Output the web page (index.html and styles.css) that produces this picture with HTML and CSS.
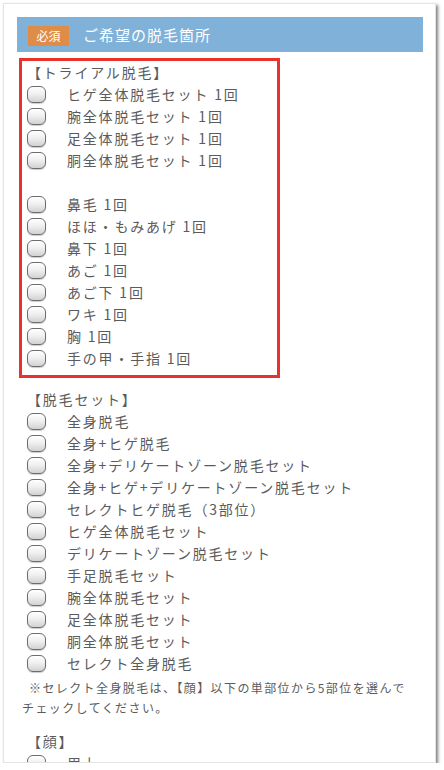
FILE: index.html
```html
<!DOCTYPE html>
<html lang="ja">
<head>
<meta charset="utf-8">
<link rel="stylesheet" href="styles.css">
</head>
<body>
<div class="card">
  <div class="head">
    <span class="badge">必須</span>
    <span class="title">ご希望の脱毛箇所</span>
  </div>

  <div class="group trial">
    <div class="label">【トライアル脱毛】</div>
    <label class="row"><input type="checkbox" class="cb"><span>ヒゲ全体脱毛セット 1回</span></label>
    <label class="row"><input type="checkbox" class="cb"><span>腕全体脱毛セット 1回</span></label>
    <label class="row"><input type="checkbox" class="cb"><span>足全体脱毛セット 1回</span></label>
    <label class="row"><input type="checkbox" class="cb"><span>胴全体脱毛セット 1回</span></label>
    <div class="blank"></div>
    <label class="row"><input type="checkbox" class="cb"><span>鼻毛 1回</span></label>
    <label class="row"><input type="checkbox" class="cb"><span>ほほ・もみあげ 1回</span></label>
    <label class="row"><input type="checkbox" class="cb"><span>鼻下 1回</span></label>
    <label class="row"><input type="checkbox" class="cb"><span>あご 1回</span></label>
    <label class="row"><input type="checkbox" class="cb"><span>あご下 1回</span></label>
    <label class="row"><input type="checkbox" class="cb"><span>ワキ 1回</span></label>
    <label class="row"><input type="checkbox" class="cb"><span>胸 1回</span></label>
    <label class="row"><input type="checkbox" class="cb"><span>手の甲・手指 1回</span></label>
  </div>

  <div class="group sets">
    <div class="label">【脱毛セット】</div>
    <label class="row"><input type="checkbox" class="cb"><span>全身脱毛</span></label>
    <label class="row"><input type="checkbox" class="cb"><span>全身+ヒゲ脱毛</span></label>
    <label class="row"><input type="checkbox" class="cb"><span>全身+デリケートゾーン脱毛セット</span></label>
    <label class="row"><input type="checkbox" class="cb"><span>全身+ヒゲ+デリケートゾーン脱毛セット</span></label>
    <label class="row"><input type="checkbox" class="cb"><span>セレクトヒゲ脱毛（3部位）</span></label>
    <label class="row"><input type="checkbox" class="cb"><span>ヒゲ全体脱毛セット</span></label>
    <label class="row"><input type="checkbox" class="cb"><span>デリケートゾーン脱毛セット</span></label>
    <label class="row"><input type="checkbox" class="cb"><span>手足脱毛セット</span></label>
    <label class="row"><input type="checkbox" class="cb"><span>腕全体脱毛セット</span></label>
    <label class="row"><input type="checkbox" class="cb"><span>足全体脱毛セット</span></label>
    <label class="row"><input type="checkbox" class="cb"><span>胴全体脱毛セット</span></label>
    <label class="row"><input type="checkbox" class="cb"><span>セレクト全身脱毛</span></label>
    <p class="note">※セレクト全身脱毛は、【顔】以下の単部位から5部位を選んで<br>チェックしてください。</p>
  </div>

  <div class="group face">
    <div class="label">【顔】</div>
    <label class="row"><input type="checkbox" class="cb"><span>眉上</span></label>
  </div>
</div>
</body>
</html>
```

FILE: styles.css
```css
html, body {
  margin: 0;
  padding: 0;
  background: #ffffff;
}

body {
  font-family: "Noto Sans CJK JP", "Noto Sans", sans-serif;
  color: #5b5b5b;
}

.card {
  box-sizing: border-box;
  margin: 3px 0 0 3px;
  width: 433px;
  height: 760px;
  padding: 14px 12px 0 14px;
  background: #ffffff;
  border: 1px solid #e4e4e4;
  box-shadow: 2px 2px 3px rgba(0, 0, 0, 0.5);
  overflow: hidden;
}

.head {
  margin: -1px 0 0 -1px;
  height: 35px;
  background: #80b1d8;
  display: flex;
  align-items: center;
  padding-left: 11px;
}

.badge {
  width: 41px;
  height: 20px;
  background: #e08c49;
  color: #ffffff;
  font-size: 12px;
  line-height: 20px;
  text-align: center;
  margin-top: 2px;
}

.title {
  margin-left: 14px;
  color: #ffffff;
  font-size: 15px;
  letter-spacing: 1px;
}

.group {
  font-size: 14px;
  letter-spacing: 1.8px;
  line-height: 22px;
}

.trial {
  margin: 6px 0 0 1px;
  width: 261px;
  box-sizing: border-box;
  border: 3px solid #e8322b;
  padding: 0 0 6px 5px;
}

.sets {
  margin-top: 10px;
  padding-left: 9px;
}

.face {
  margin-top: 13px;
  padding-left: 9px;
}

.label {
  height: 22px;
  white-space: nowrap;
}

.row {
  display: flex;
  align-items: center;
  height: 22px;
  white-space: nowrap;
}

.blank {
  height: 22px;
}

.cb {
  -webkit-appearance: none;
  appearance: none;
  box-sizing: border-box;
  width: 19px;
  height: 17px;
  margin: 0 21px 0 0;
  border: 1px solid #6c6c6c;
  border-radius: 6px;
  background: linear-gradient(#ffffff 0%, #f0f0f0 45%, #d2d2d2 100%);
  box-shadow: inset 0 1px 0 #ffffff, 0 1px 1px rgba(0, 0, 0, 0.2);
  flex: none;
}

.note {
  margin: 4px 0 0 -5px;
  font-size: 12px;
  letter-spacing: 1.4px;
  line-height: 19.5px;
  text-indent: 7px;
  white-space: nowrap;
}
```
